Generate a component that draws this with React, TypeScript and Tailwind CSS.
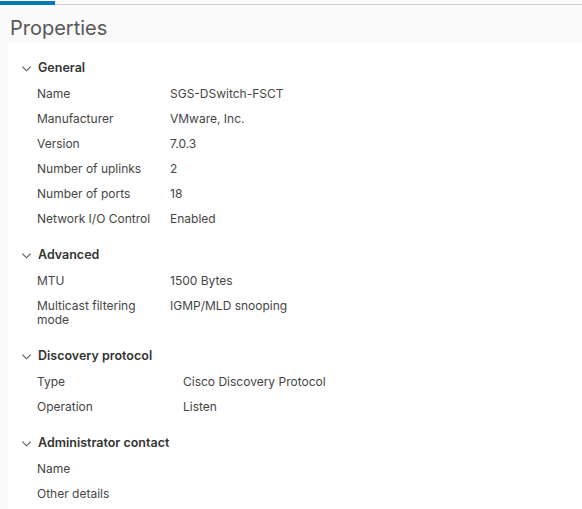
import React from 'react';

interface Row {
  label: string;
  value?: string;
}

interface Section {
  title: string;
  labelWidth: string;
  rows: Row[];
}

const sections: Section[] = [
  {
    title: 'General',
    labelWidth: 'w-[133px]',
    rows: [
      { label: 'Name', value: 'SGS-DSwitch-FSCT' },
      { label: 'Manufacturer', value: 'VMware, Inc.' },
      { label: 'Version', value: '7.0.3' },
      { label: 'Number of uplinks', value: '2' },
      { label: 'Number of ports', value: '18' },
      { label: 'Network I/O Control', value: 'Enabled' },
    ],
  },
  {
    title: 'Advanced',
    labelWidth: 'w-[133px]',
    rows: [
      { label: 'MTU', value: '1500 Bytes' },
      { label: 'Multicast filtering mode', value: 'IGMP/MLD snooping' },
    ],
  },
  {
    title: 'Discovery protocol',
    labelWidth: 'w-[146px]',
    rows: [
      { label: 'Type', value: 'Cisco Discovery Protocol' },
      { label: 'Operation', value: 'Listen' },
    ],
  },
  {
    title: 'Administrator contact',
    labelWidth: 'w-[146px]',
    rows: [{ label: 'Name' }, { label: 'Other details' }],
  },
];

const Chevron = () => (
  <svg width="11" height="11" viewBox="0 0 12 12" className="text-[#565656]">
    <path d="M1.5 4 L6 8.5 L10.5 4" fill="none" stroke="currentColor" strokeWidth="1.2" />
  </svg>
);

const PropertySection: React.FC<{ section: Section }> = ({ section }) => (
  <div className="mb-[11px]">
    <div className="flex items-center h-[26px] gap-[6px]">
      <Chevron />
      <span className="text-[12.5px] font-semibold text-[#333333]">{section.title}</span>
    </div>
    {section.rows.map((row) => (
      <div key={row.label} className="flex pl-[16px] py-[5.5px] leading-[14px] text-[12px] text-[#454545]">
        <div className={`${section.labelWidth} shrink-0 pr-[10px]`}>
          <span className="block max-w-[118px]">{row.label}</span>
        </div>
        <div>{row.value}</div>
      </div>
    ))}
  </div>
);

const App: React.FC = () => {
  return (
    <div className="h-[509px] w-[582px] overflow-hidden bg-[#fafafa] flex flex-col" style={{ fontFamily: 'Inter, "Liberation Sans", sans-serif' }}>
      <div className="flex mt-[1px]">
        <div className="w-[55px] h-[4px] bg-[#0079b8]" />
        <div className="flex-1 h-[4px] border-b border-[#cccccc]" />
      </div>
      <h1 className="pl-[10px] pt-[10px] pb-[2px] text-[20px] leading-[26px] text-[#575757]">Properties</h1>
      <div className="flex-1 ml-[8px] bg-white pl-[13px] pt-[12px]">
        {sections.map((s) => (
          <PropertySection key={s.title} section={s} />
        ))}
      </div>
    </div>
  );
};

export default App;
